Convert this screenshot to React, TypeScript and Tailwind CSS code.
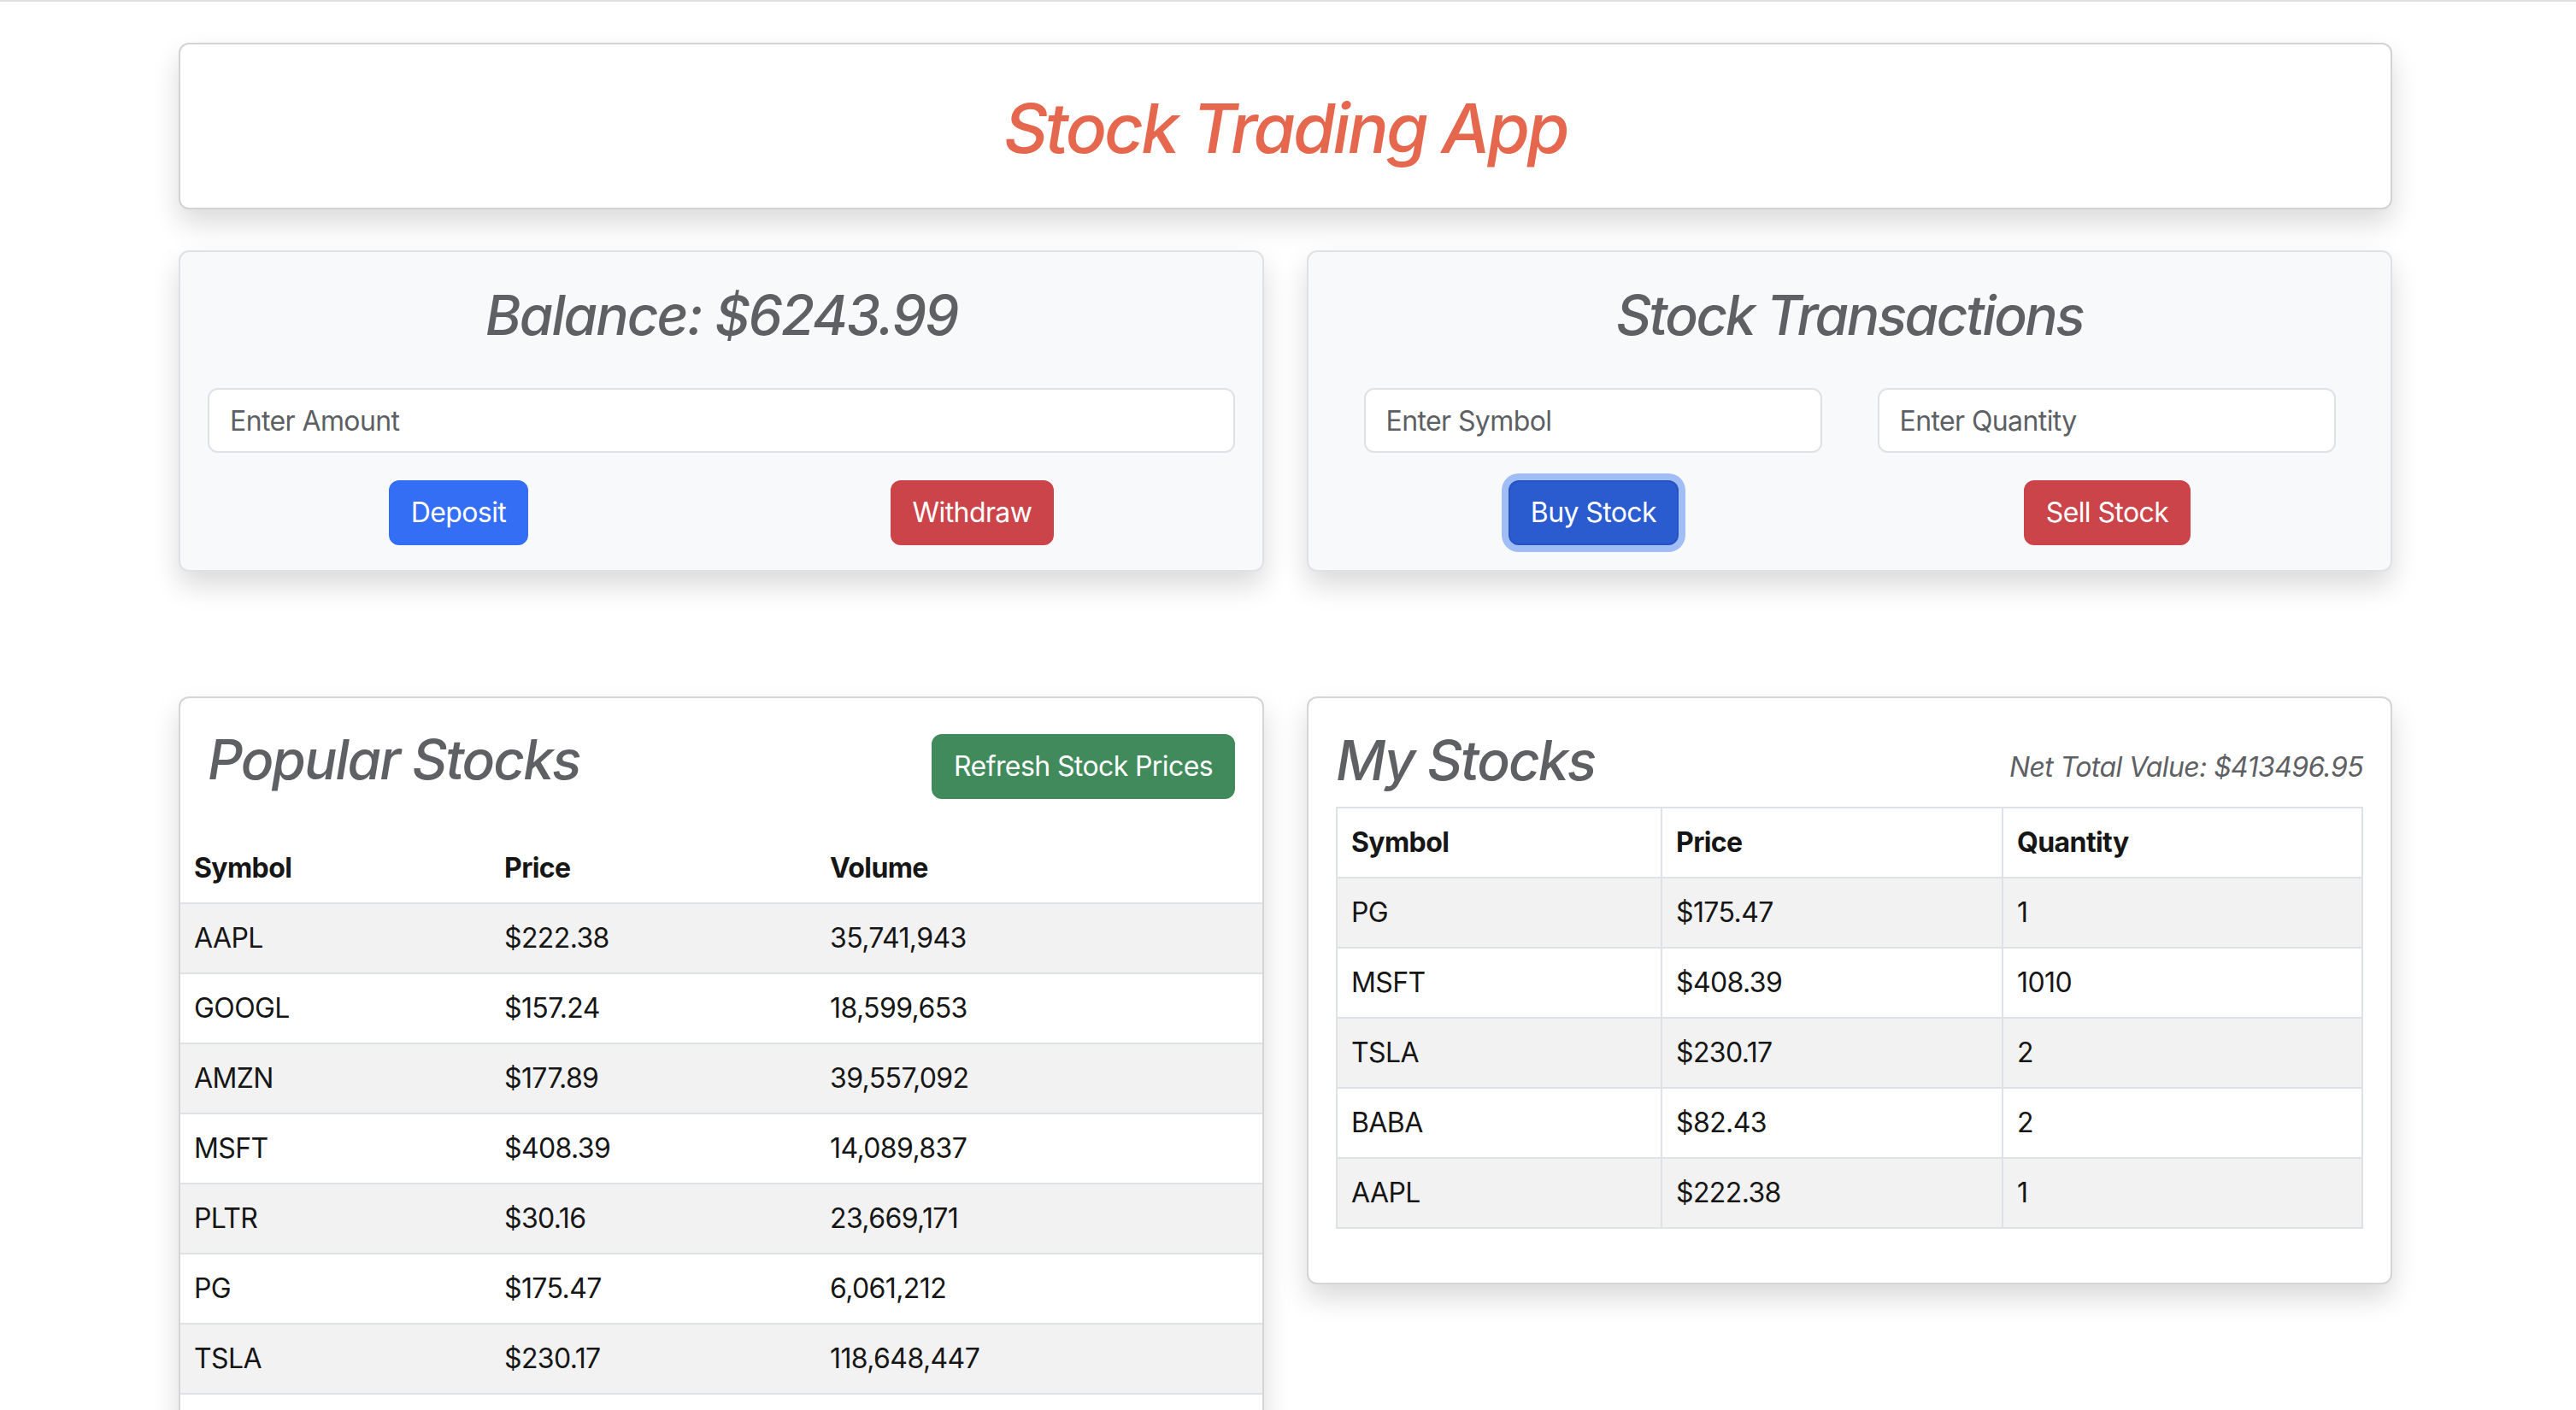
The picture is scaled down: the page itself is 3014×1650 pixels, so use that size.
import React from "react";

const popular = [
  ["AAPL", "$222.38", "35,741,943"],
  ["GOOGL", "$157.24", "18,599,653"],
  ["AMZN", "$177.89", "39,557,092"],
  ["MSFT", "$408.39", "14,089,837"],
  ["PLTR", "$30.16", "23,669,171"],
  ["PG", "$175.47", "6,061,212"],
  ["TSLA", "$230.17", "118,648,447"],
  ["BABA", "$82.43", "12,406,518"],
];

const mine = [
  ["PG", "$175.47", "1"],
  ["MSFT", "$408.39", "1010"],
  ["TSLA", "$230.17", "2"],
  ["BABA", "$82.43", "2"],
  ["AAPL", "$222.38", "1"],
];

export default function App() {
  return (
    <div className="min-h-screen bg-white border-t-2 border-[#e0e0e0] font-['Inter','Noto_Sans',sans-serif] text-[#161616] tracking-[-0.6px] pb-[80px]">
      <div className="w-[2590px] ml-[209px] pt-[48px]">
        {/* Header */}
        <div className="rounded-[12px] border-2 border-[#d3d3d3] bg-white shadow-[0_16px_32px_rgba(0,0,0,0.15)] pt-[50px] pb-[45px] text-center">
          <h1 className="text-[80px] leading-[96px] italic font-medium text-[#e5674e] tracking-[-3px]">
            Stock Trading App
          </h1>
        </div>

        {/* Row 2 */}
        <div className="grid grid-cols-2 gap-x-[50px] mt-[48px]">
          <div className="rounded-[12px] border-2 border-[#dee2e6] bg-[#f8f9fa] shadow-[0_16px_32px_rgba(0,0,0,0.15)] px-[32px] pt-[35px] pb-[29px]">
            <h2 className="text-[64px] leading-[77px] italic font-medium text-[#5e6064] text-center mb-[47px] tracking-[-2px]">
              Balance: $6243.99
            </h2>
            <input
              className="block w-full h-[76px] rounded-[12px] border-2 border-[#dee2e6] bg-white px-[24px] text-[32px] text-[#212529] placeholder:text-[#5c5f63] outline-none tracking-[-0.6px]"
              placeholder="Enter Amount"
            />
            <div className="flex justify-around mt-[32px]">
              <button className="h-[76px] px-[24px] rounded-[12px] border-2 border-[#346ef5] bg-[#346ef5] text-white text-[32px] leading-[48px]">
                Deposit
              </button>
              <button className="h-[76px] px-[24px] rounded-[12px] border-2 border-[#cb444a] bg-[#cb444a] text-white text-[32px] leading-[48px]">
                Withdraw
              </button>
            </div>
          </div>

          <div className="rounded-[12px] border-2 border-[#dee2e6] bg-[#f8f9fa] shadow-[0_16px_32px_rgba(0,0,0,0.15)] px-[32px] pt-[35px] pb-[29px]">
            <h2 className="text-[64px] leading-[77px] italic font-medium text-[#5e6064] text-center mb-[47px] tracking-[-2.5px]">
              Stock Transactions
            </h2>
            <div className="flex justify-around">
              <input
                className="block w-[536px] h-[76px] rounded-[12px] border-2 border-[#dee2e6] bg-white px-[24px] text-[32px] text-[#212529] placeholder:text-[#5c5f63] outline-none tracking-[-0.6px]"
                placeholder="Enter Symbol"
              />
              <input
                className="block w-[536px] h-[76px] rounded-[12px] border-2 border-[#dee2e6] bg-white px-[24px] text-[32px] text-[#212529] placeholder:text-[#5c5f63] outline-none tracking-[-0.6px]"
                placeholder="Enter Quantity"
              />
            </div>
            <div className="flex justify-around mt-[32px]">
              <button className="h-[76px] px-[24px] rounded-[12px] border-2 border-[#2652c2] bg-[#2a5bcf] text-white text-[32px] leading-[48px] shadow-[0_0_0_8px_#a1bdf5]">
                Buy Stock
              </button>
              <button className="h-[76px] px-[24px] rounded-[12px] border-2 border-[#cb444a] bg-[#cb444a] text-white text-[32px] leading-[48px]">
                Sell Stock
              </button>
            </div>
          </div>
        </div>

        {/* Row 3 */}
        <div className="grid grid-cols-2 gap-x-[50px] mt-[146px] items-start">
          <div className="rounded-[12px] border-2 border-[#d5d5d5] bg-white shadow-[0_16px_32px_rgba(0,0,0,0.15)] overflow-hidden">
            <div className="flex items-center justify-between px-[32px] pt-[33px] pb-[33px]">
              <h2 className="text-[64px] leading-[77px] italic font-medium text-[#5e6064] mb-[16px] tracking-[-2px]">
                Popular Stocks
              </h2>
              <button className="h-[76px] px-[24px] rounded-[12px] border-2 border-[#418a5b] bg-[#418a5b] text-white text-[32px] leading-[48px]">
                Refresh Stock Prices
              </button>
            </div>
            <table className="w-full border-collapse text-[32px] leading-[48px]">
              <colgroup>
                <col className="w-[363px]" />
                <col className="w-[381px]" />
                <col />
              </colgroup>
              <thead>
                <tr>
                  <th className="text-left font-bold px-[16px] py-[16px] border-b-2 border-[#dee2e6]">Symbol</th>
                  <th className="text-left font-bold px-[16px] py-[16px] border-b-2 border-[#dee2e6]">Price</th>
                  <th className="text-left font-bold px-[16px] py-[16px] border-b-2 border-[#dee2e6]">Volume</th>
                </tr>
              </thead>
              <tbody>
                {popular.map((r, i) => (
                  <tr key={r[0]} className={i % 2 === 0 ? "bg-[#f2f2f2]" : "bg-white"}>
                    <td className="px-[16px] py-[16px] border-b-2 border-[#dee2e6]">{r[0]}</td>
                    <td className="px-[16px] py-[16px] border-b-2 border-[#dee2e6]">{r[1]}</td>
                    <td className="px-[16px] py-[16px] border-b-2 border-[#dee2e6]">{r[2]}</td>
                  </tr>
                ))}
              </tbody>
            </table>
          </div>

          <div className="rounded-[12px] border-2 border-[#d5d5d5] bg-white shadow-[0_16px_32px_rgba(0,0,0,0.15)] px-[32px] pt-[34px] pb-[33px]">
            <div className="flex items-center justify-between">
              <h2 className="text-[64px] leading-[77px] italic font-medium text-[#5e6064] mb-[16px] tracking-[-2px]">
                My Stocks
              </h2>
              <span className="text-[32px] leading-[48px] italic text-[#5e6064]">
                Net Total Value: $413496.95
              </span>
            </div>
            <table className="w-full border-collapse border-2 border-[#dee2e6] text-[32px] leading-[48px] mb-[30px]">
              <colgroup>
                <col className="w-[380px]" />
                <col className="w-[399px]" />
                <col />
              </colgroup>
              <thead>
                <tr className="bg-white">
                  <th className="text-left font-bold px-[16px] py-[16px] border-2 border-[#dee2e6]">Symbol</th>
                  <th className="text-left font-bold px-[16px] py-[16px] border-2 border-[#dee2e6]">Price</th>
                  <th className="text-left font-bold px-[16px] py-[16px] border-2 border-[#dee2e6]">Quantity</th>
                </tr>
              </thead>
              <tbody>
                {mine.map((r, i) => (
                  <tr key={r[0]} className={i % 2 === 0 ? "bg-[#f2f2f2]" : "bg-white"}>
                    <td className="px-[16px] py-[16px] border-2 border-[#dee2e6]">{r[0]}</td>
                    <td className="px-[16px] py-[16px] border-2 border-[#dee2e6]">{r[1]}</td>
                    <td className="px-[16px] py-[16px] border-2 border-[#dee2e6]">{r[2]}</td>
                  </tr>
                ))}
              </tbody>
            </table>
          </div>
        </div>
      </div>
    </div>
  );
}
